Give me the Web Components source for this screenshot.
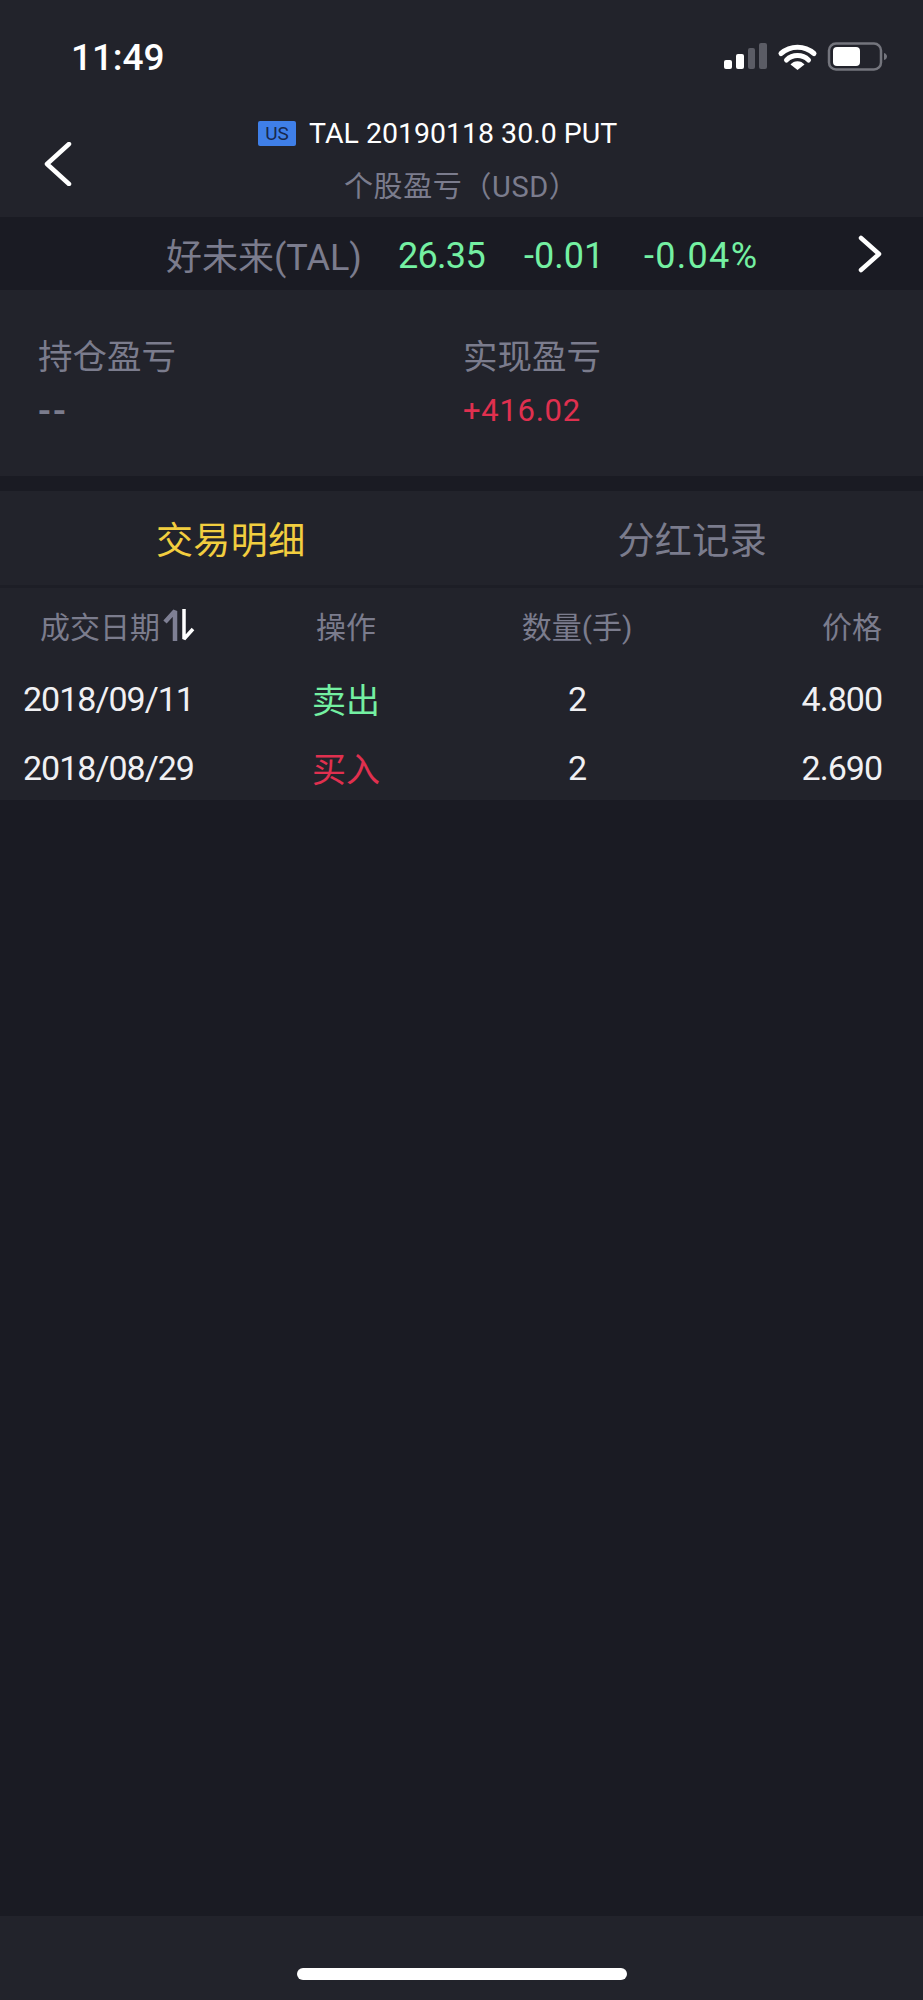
<html>
  <head>
    <meta charset="utf-8">
    <style>
      html, body { margin: 0; padding: 0; background: #1a1b23; }
      body {
        width: 923px; height: 2000px;
        display: flex; flex-flow: column nowrap;
        font-family: Roboto, "Noto Sans CJK SC", sans-serif;
        color: #7b7c8d;
      }
      .fill { flex: 1; }
    </style>
  </head>
  <body>

    <app-status-bar time="11:49"></app-status-bar>
    <nav-header market="US" title="TAL 20190118 30.0 PUT">个股盈亏（USD）</nav-header>
    <stock-bar name="好未来(TAL)" price="26.35" change="-0.01" percent="-0.04%"></stock-bar>
    <pnl-summary>
      <pnl-item label="持仓盈亏" value="--" tone="none"></pnl-item>
      <pnl-item label="实现盈亏" value="+416.02" tone="up"></pnl-item>
    </pnl-summary>
    <tab-bar>
      <tab-item active>交易明细</tab-item>
      <tab-item>分红记录</tab-item>
    </tab-bar>
    <trade-table>
      <trade-row date="2018/09/11" action="卖出" tone="down" qty="2" price="4.800"></trade-row>
      <trade-row date="2018/08/29" action="买入" tone="up" qty="2" price="2.690"></trade-row>
    </trade-table>
    <div class="fill"></div>
    <home-indicator></home-indicator>

    <!-- STATUS BAR ------------------------------------------------------------------------------------ -->

    <template id="app-status-bar-template">
      <style>
        :host { display: flex; align-items: center; justify-content: space-between; height: 114px; padding: 0 36px 0 71px; background: #22232b; box-sizing: border-box; }
        .time { color: #fff; font-size: 37px; font-weight: 500; letter-spacing: -.1px; }
        svg { display: block; }
      </style>
      <span class="time" id="time"></span>
      <svg width="166" height="30" viewBox="0 0 166 30">
        <rect x="3" y="18" width="8" height="9" rx="2" fill="#fff"/>
        <rect x="15" y="12" width="8" height="15" rx="2" fill="#fff"/>
        <rect x="27" y="6" width="7" height="21" rx="2" fill="#5b5c65"/>
        <rect x="38" y="1" width="8" height="26" rx="2" fill="#5b5c65"/>
        <path d="M60 11.5a25 25 0 0 1 33 0" fill="none" stroke="#fff" stroke-width="5" stroke-linecap="round"/>
        <path d="M65.500 18a16 16 0 0 1 22 0" fill="none" stroke="#fff" stroke-width="5" stroke-linecap="round"/>
        <path d="M69.500 22.500a9 9 0 0 1 14 0L76.500 28z" fill="#fff"/>
        <rect x="108" y="1.500" width="52" height="26" rx="7" fill="none" stroke="#74757d" stroke-width="2.500"/>
        <rect x="112" y="5" width="27" height="19" rx="4" fill="#fff"/>
        <path d="M163 11c2 .5 3 2 3 3.500s-1 3-3 3.500z" fill="#74757d"/>
      </svg>
    </template>

    <script>
      var cedoc = document;

      function stamp (el, id) {
        el.attachShadow({mode: 'open'});
        el.shadowRoot.appendChild(cedoc.querySelector(id).content.cloneNode(true));
        return el.shadowRoot;
      }

      class AppStatusBar extends HTMLElement {
        connectedCallback () {
          let root = stamp(this, '#app-status-bar-template');
          root.querySelector('#time').textContent = this.getAttribute('time');
        }
      }
      window.customElements.define('app-status-bar', AppStatusBar);
    </script>

    <!-- NAV HEADER ------------------------------------------------------------------------------------ -->

    <template id="nav-header-template">
      <style>
        :host { display: flex; flex-flow: row nowrap; height: 103px; background: #22232b; box-sizing: border-box; }
        .back { width: 44px; padding: 28px 0 0 44px; flex: none; }
        .titles { flex: 1; display: flex; flex-flow: column nowrap; }
        .top { display: flex; align-items: center; gap: 13px; padding-left: 170px; height: 38px; }
        .badge { width: 38px; height: 25px; border-radius: 2px; background: #3f7fe8; color: #17284d; font-size: 19px; line-height: 25px; text-align: center; }
        .title { color: #fff; font-size: 28.500px; font-weight: 400; white-space: nowrap; }
        .sub { padding-left: 256px; margin-top: 16px; font-size: 29px; line-height: 38px; letter-spacing: .6px; color: #7b7c8d; white-space: nowrap; }
      </style>
      <div class="back">
        <svg width="28" height="44" viewBox="0 0 28 44"><path d="M25 2 3 22l22 20" fill="none" stroke="#fff" stroke-width="4.500" stroke-linecap="round" stroke-linejoin="round"/></svg>
      </div>
      <div class="titles">
        <div class="top"><span class="badge" id="badge"></span><span class="title" id="title"></span></div>
        <div class="sub"><slot></slot></div>
      </div>
    </template>

    <script>
      class NavHeader extends HTMLElement {
        connectedCallback () {
          let root = stamp(this, '#nav-header-template');
          root.querySelector('#badge').textContent = this.getAttribute('market');
          root.querySelector('#title').textContent = this.getAttribute('title');
        }
      }
      window.customElements.define('nav-header', NavHeader);
    </script>

    <!-- STOCK BAR ------------------------------------------------------------------------------------- -->

    <template id="stock-bar-template">
      <style>
        :host { display: flex; align-items: center; height: 73px; padding: 0 40px 0 166px; background: #1a1b23; box-sizing: border-box; }
        span { white-space: nowrap; font-size: 36px; }
        .name { color: #7b7c8d; width: 232px; }
        .up { color: #74f0a2; margin-top: 4px; }
        .price { width: 126px; letter-spacing: -.7px; }
        .change { width: 120px; letter-spacing: 0; }
        .percent { letter-spacing: 1.300px; }
        svg { margin-left: auto; display: block; }
      </style>
      <span class="name" id="name"></span>
      <span class="up price" id="price"></span>
      <span class="up change" id="change"></span>
      <span class="up percent" id="percent"></span>
      <svg width="26" height="38" viewBox="0 0 26 38"><path d="M4 3l18 16L4 35" fill="none" stroke="#fff" stroke-width="4.500" stroke-linecap="round" stroke-linejoin="round"/></svg>
    </template>

    <script>
      class StockBar extends HTMLElement {
        connectedCallback () {
          let root = stamp(this, '#stock-bar-template');
          ['name', 'price', 'change', 'percent'].forEach(k => {
            root.querySelector('#' + k).textContent = this.getAttribute(k);
          });
        }
      }
      window.customElements.define('stock-bar', StockBar);
    </script>

    <!-- PNL SUMMARY ----------------------------------------------------------------------------------- -->

    <template id="pnl-summary-template">
      <style>
        :host { display: grid; grid-template-columns: 425px 1fr; height: 186px; padding: 44px 0 0 38px; margin-bottom: 15px; background: #22232b; box-sizing: border-box; }
      </style>
      <slot></slot>
    </template>

    <template id="pnl-item-template">
      <style>
        :host { display: flex; flex-flow: column nowrap; }
        .label { font-size: 34.500px; line-height: 46px; color: #7b7c8d; }
        .value { font-size: 31px; line-height: 40px; margin-top: 11px; letter-spacing: .7px; color: #7b7c8d; }
        :host([tone="up"]) .value { color: #e0304f; }
        :host([tone="none"]) .value { font-size: 38px; font-weight: 500; letter-spacing: 2px; }
      </style>
      <div class="label" id="label"></div>
      <div class="value" id="value"></div>
    </template>

    <script>
      class PnlSummary extends HTMLElement {
        connectedCallback () { stamp(this, '#pnl-summary-template'); }
      }
      class PnlItem extends HTMLElement {
        connectedCallback () {
          let root = stamp(this, '#pnl-item-template');
          root.querySelector('#label').textContent = this.getAttribute('label');
          root.querySelector('#value').textContent = this.getAttribute('value');
        }
      }
      window.customElements.define('pnl-summary', PnlSummary);
      window.customElements.define('pnl-item', PnlItem);
    </script>

    <!-- TABS ------------------------------------------------------------------------------------------ -->

    <template id="tab-bar-template">
      <style>
        :host { display: grid; grid-template-columns: 1fr 1fr; height: 97px; box-sizing: border-box; border-bottom: 3px solid #1d1e26; background: #22232b; }
      </style>
      <slot></slot>
    </template>

    <template id="tab-item-template">
      <style>
        :host { display: flex; align-items: center; justify-content: center; font-size: 37px; letter-spacing: .4px; color: #7b7c8d; }
        :host([active]) { color: #f2ce3f; }
      </style>
      <slot></slot>
    </template>

    <script>
      class TabBar extends HTMLElement {
        connectedCallback () { stamp(this, '#tab-bar-template'); }
      }
      class TabItem extends HTMLElement {
        connectedCallback () { stamp(this, '#tab-item-template'); }
      }
      window.customElements.define('tab-bar', TabBar);
      window.customElements.define('tab-item', TabItem);
    </script>

    <!-- TRADE TABLE ----------------------------------------------------------------------------------- -->

    <template id="trade-table-template">
      <style>
        :host { display: block; height: 212px; background: #22232b; box-sizing: border-box; }
        .head {
          display: grid; grid-template-columns: 267px 112px 350px 130px; align-items: center;
          height: 74px; margin-bottom: 2px; padding: 0 41px 0 23px;
          font-size: 30px; color: #7b7c8d;
        }
        .date { display: flex; align-items: center; padding-left: 17px; gap: 3px; }
        .c { text-align: center; }
        .r { text-align: right; }
        svg { display: block; }
      </style>
      <div class="head">
        <div class="date">成交日期
          <svg width="32" height="34" viewBox="0 0 32 34">
            <path d="M12 33V3L2 14" fill="none" stroke="#7e7f94" stroke-width="4.500" stroke-linejoin="bevel"/>
            <path d="M21 1v30l9-10" fill="none" stroke="#fff" stroke-width="3.500" stroke-linejoin="bevel"/>
          </svg>
        </div>
        <div class="c">操作</div>
        <div class="c">数量(手)</div>
        <div class="r">价格</div>
      </div>
      <slot></slot>
    </template>

    <template id="trade-row-template">
      <style>
        :host {
          display: grid; grid-template-columns: 267px 112px 350px 130px; align-items: center;
          height: 69px; padding: 0 41px 0 23px;
          color: #f0f0f3; font-size: 34px; letter-spacing: -1px;
        }
        .c { text-align: center; }
        .r { text-align: right; }
        .action { letter-spacing: 0; }
        :host([tone="up"]) .action { color: #e0304f; }
        :host([tone="down"]) .action { color: #74f0a2; }
      </style>
      <div id="date"></div>
      <div class="c action" id="action"></div>
      <div class="c" id="qty"></div>
      <div class="r" id="price"></div>
    </template>

    <script>
      class TradeTable extends HTMLElement {
        connectedCallback () { stamp(this, '#trade-table-template'); }
      }
      class TradeRow extends HTMLElement {
        connectedCallback () {
          let root = stamp(this, '#trade-row-template');
          ['date', 'action', 'qty', 'price'].forEach(k => {
            root.querySelector('#' + k).textContent = this.getAttribute(k);
          });
        }
      }
      window.customElements.define('trade-table', TradeTable);
      window.customElements.define('trade-row', TradeRow);
    </script>

    <!-- HOME INDICATOR -------------------------------------------------------------------------------- -->

    <template id="home-indicator-template">
      <style>
        :host { display: flex; justify-content: center; height: 84px; padding-top: 52px; background: #22232b; box-sizing: border-box; }
        .bar { width: 330px; height: 12px; border-radius: 6px; background: #fff; }
      </style>
      <div class="bar"></div>
    </template>

    <script>
      class HomeIndicator extends HTMLElement {
        connectedCallback () { stamp(this, '#home-indicator-template'); }
      }
      window.customElements.define('home-indicator', HomeIndicator);
    </script>

  </body>
</html>
